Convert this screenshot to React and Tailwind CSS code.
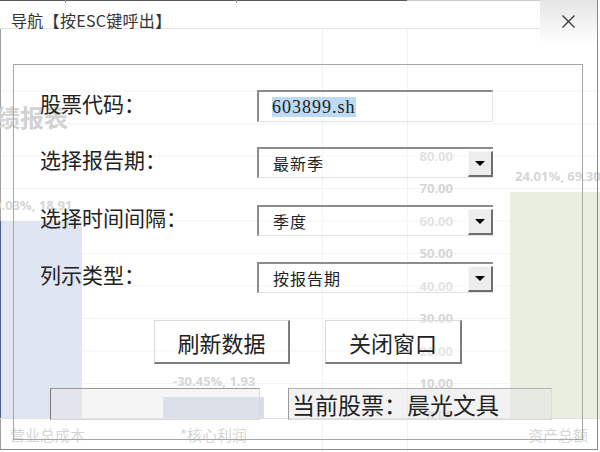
import React from 'react';

const cjk = "font-['Noto_Sans_CJK_SC',sans-serif]";

const gridYs = [91, 124, 156, 188.5, 221, 253.5, 286, 318.5, 351, 383.5];
const axisLabels = [
    ['80.00', 161], ['70.00', 193], ['60.00', 226], ['50.00', 258], ['40.00', 291],
    ['30.00', 323], ['20.00', 356], ['10.00', 388], ['0.00', 420],
];

// the Excel chart that shows through the translucent dialog
const ChartBehind = () => (
    <svg className="absolute inset-0" width="600" height="452" viewBox="0 0 600 452">
        <line x1="0" y1="0.5" x2="407" y2="0.5" stroke="#5a5a5a" />
        <line x1="407" y1="0.5" x2="540" y2="0.5" stroke="#c9c9c9" />
        <line x1="540" y1="0.5" x2="598" y2="0.5" stroke="#9a9a9a" />
        <line x1="65.5" y1="0" x2="65.5" y2="3" stroke="#9a9a9a" />
        <line x1="236.5" y1="0" x2="236.5" y2="3" stroke="#9a9a9a" />
        <line x1="0" y1="28.5" x2="540" y2="28.5" stroke="#e3e3e3" />
        <line x1="322.5" y1="29" x2="322.5" y2="452" stroke="#f2f2f2" />
        <line x1="407.5" y1="29" x2="407.5" y2="452" stroke="#f2f2f2" />
        {gridYs.map((y) => (
            <line key={y} x1="0" y1={y} x2="600" y2={y} stroke="#f3f3f3" />
        ))}

        <rect x="0" y="221" width="82" height="197" fill="#dfe5f1" />
        <line x1="0.5" y1="29" x2="0.5" y2="450" stroke="#a0a0a0" />
        <line x1="0.5" y1="221" x2="0.5" y2="418" stroke="#4d5d88" />
        <rect x="163" y="397" width="101" height="21" fill="#d6dde9" />
        <rect x="510" y="192" width="90" height="226" fill="#e8efe1" />
        <line x1="0" y1="418.5" x2="600" y2="418.5" stroke="#e0e0e0" />

        <g fontFamily="'Open Sans', sans-serif" fontWeight="700" fontSize="13" fill="#d6d6d6">
            {axisLabels.map(([t, y]) => (
                <text key={t} x="453" y={y} textAnchor="end">{t}</text>
            ))}
            <text x="-6" y="210">9.03%, 18.91</text>
            <text x="173" y="386">-30.45%, 1.93</text>
            <text x="515" y="181">24.01%, 69.30</text>
        </g>
        <g fontFamily="'Noto Sans CJK SC', sans-serif" fill="#d6d6d6">
            <text x="-28" y="127" fontSize="24" fontWeight="700" fill="#d2d2d2">业绩报表</text>
            <text x="10" y="441" fontSize="15">营业总成本</text>
            <text x="180" y="441" fontSize="15">*核心利润</text>
            <text x="528" y="441" fontSize="15">资产总额</text>
        </g>

        <line x1="597.5" y1="0" x2="597.5" y2="450" stroke="#8a8a8a" />
        <line x1="0" y1="449.5" x2="598" y2="449.5" stroke="#8a8a8a" />
    </svg>
);

const Combo = ({ value }) => (
    <div className="flex h-[31px] w-[236px] items-end border-t-2 border-l-2 border-b border-t-[#8c8c8c] border-l-[#8c8c8c] border-b-[#e2e2e2] bg-white/30">
        <span className="flex-1 self-center pl-[14px] text-[16px] leading-[22px] tracking-[1px] text-[#222]">{value}</span>
        <div className="flex h-[26px] w-[25px] items-center justify-center border-t border-l border-b-2 border-r-2 border-t-[#f6f6f6] border-l-[#f6f6f6] border-b-[#6e6e6e] border-r-[#6e6e6e] bg-[#ebebeb]/90">
            <div className="h-0 w-0 border-x-[5px] border-t-[5px] border-x-transparent border-t-black" />
        </div>
    </div>
);

const Row = ({ label, children, className = '' }) => (
    <div className={`flex items-center ${className}`}>
        <span className="-mt-[7px] w-[217px] text-[21px] leading-[28px] text-[#222]">{label}</span>
        {children}
    </div>
);

const RaisedButton = ({ children, width }) => (
    <button className={`flex h-[44px] ${width} items-center justify-center border-t border-l border-b-2 border-r-2 border-t-[#dadada] border-l-[#dadada] border-b-[#7c7c7c] border-r-[#7c7c7c] bg-white/40 text-[22px] leading-[28px] text-[#222]`}>
        {children}
    </button>
);

export default function App() {
    return (
        <div className={`relative h-[452px] w-[600px] overflow-hidden bg-white ${cjk}`}>
            <ChartBehind />

            <div className="relative flex h-full flex-col">
                <div className="flex h-[44px]">
                    <span className="pl-[11px] pt-[9px] text-[16px] leading-[22px] tracking-[0.3px] text-[#333]">导航【按ESC键呼出】</span>
                    <div className="ml-auto mr-[3px] flex h-[45px] w-[57px] justify-center bg-gradient-to-b from-[#e6e6e6] to-white/0 pt-[15px]">
                        <svg width="13" height="13" viewBox="0 0 13 13">
                            <path d="M0.5 0.5 L12.5 12.5 M12.5 0.5 L0.5 12.5" stroke="#333" strokeWidth="1.2" />
                        </svg>
                    </div>
                </div>

                <div className="ml-[13px] mt-[20px] h-[376px] w-[570px] border border-[#a6a6a6] pl-[26px] pt-[25px]">
                    <Row label="股票代码：">
                        <div className="flex h-[32px] w-[236px] items-center border-t-2 border-l-2 border-b border-r border-t-[#8c8c8c] border-l-[#8c8c8c] border-b-[#e2e2e2] border-r-[#e2e2e2] bg-white/30 pl-[13px]">
                            <span className="bg-[#bddbf5] font-['Liberation_Serif',serif] text-[18px] leading-[20px] tracking-[1px] text-[#222]">603899.sh</span>
                        </div>
                    </Row>
                    <Row label="选择报告期：" className="mt-[25px]">
                        <Combo value="最新季" />
                    </Row>
                    <Row label="选择时间间隔：" className="mt-[27px]">
                        <Combo value="季度" />
                    </Row>
                    <Row label="列示类型：" className="mt-[26px]">
                        <Combo value="按报告期" />
                    </Row>

                    <div className="ml-[114px] mt-[27px] flex gap-[35px]">
                        <RaisedButton width="w-[136px]">刷新数据</RaisedButton>
                        <RaisedButton width="w-[137px]">关闭窗口</RaisedButton>
                    </div>

                    <div className="ml-[10px] mt-[24px] flex gap-[28px]">
                        <div className="h-[32px] w-[210px] border-t border-l border-b border-r border-t-[#9a9a9a] border-l-[#7a7a7a] border-b-[#d8d8d8] border-r-[#d8d8d8] bg-[#e6e6e6]/40" />
                        <div className="flex h-[32px] w-[264px] items-center border-t border-l border-b border-r border-t-[#b4b4b4] border-l-[#9a9a9a] border-b-[#dadada] border-r-[#dadada] bg-[#e6e6e6]/50 pl-[3px] text-[23px] leading-[28px] text-[#222]">
                            当前股票：晨光文具
                        </div>
                    </div>
                </div>
            </div>
        </div>
    );
}
